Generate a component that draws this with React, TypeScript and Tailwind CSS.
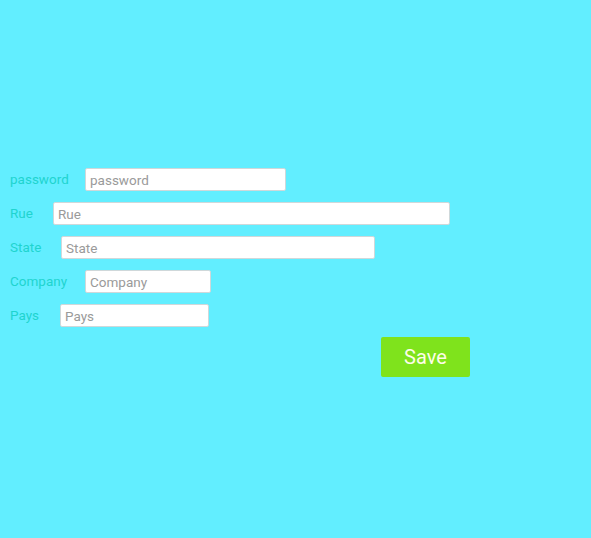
import React from "react";

const rows = [
  { label: "password", lw: "w-[75px]", w: "w-[201px]" },
  { label: "Rue", lw: "w-[43px]", w: "w-[397px]" },
  { label: "State", lw: "w-[51px]", w: "w-[314px]" },
  { label: "Company", lw: "w-[75px]", w: "w-[126px]" },
  { label: "Pays", lw: "w-[50px]", w: "w-[149px]" },
];

export default function App() {
  return (
    <div className="w-[591px] h-[538px] bg-[#62eeff] font-['Roboto',Arial,sans-serif] pt-[168px] pl-[10px]">
      <div className="flex flex-col gap-[11px]">
        {rows.map((r) => (
          <div key={r.label} className="flex items-center h-[23px]">
            <span className={`${r.lw} shrink-0 text-[13.5px] text-[#1fd4cf]`}>{r.label}</span>
            <input
              placeholder={r.label}
              className={`${r.w} h-[23px] bg-white border border-[#cfd8da] rounded-[2px] px-[4px] text-[13.5px] text-[#555] placeholder:text-[#9a9a9a] outline-none`}
            />
          </div>
        ))}
      </div>
      <div className="mt-[10px] ml-[371px]">
        <button className="w-[89px] h-[40px] bg-[#7fe31c] rounded-[2px] text-[20px] text-[#fdfde8]">
          Save
        </button>
      </div>
    </div>
  );
}
